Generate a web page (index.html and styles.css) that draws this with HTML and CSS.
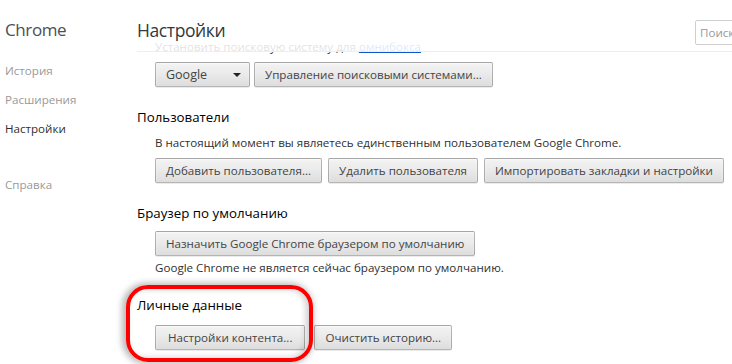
FILE: index.html
```html
<!DOCTYPE html>
<html lang="ru">
<head>
    <meta charset="utf-8">
    <title>Настройки</title>
    <link rel="stylesheet" href="styles.css">
</head>
<body>
    <div class="page">
        <nav class="sidebar">
            <div class="brand">Chrome</div>
            <ul class="nav">
                <li>История</li>
                <li>Расширения</li>
                <li class="active">Настройки</li>
                <li class="help">Справка</li>
            </ul>
        </nav>

        <main class="content">
            <div class="scroll">
                <div class="section-body">
                    <p class="line">Установить поисковую систему для <a href="#">омнибокса</a></p>
                    <div class="row">
                        <div class="select">Google <span class="arrow"></span></div>
                        <button>Управление поисковыми системами...</button>
                    </div>
                </div>

                <section class="section">
                    <h3>Пользователи</h3>
                    <div class="section-body">
                        <p class="line">В настоящий момент вы являетесь единственным пользователем Google Chrome.</p>
                        <div class="row">
                            <button>Добавить пользователя...</button>
                            <button>Удалить пользователя</button>
                            <button>Импортировать закладки и настройки</button>
                        </div>
                    </div>
                </section>

                <section class="section">
                    <h3>Браузер по умолчанию</h3>
                    <div class="section-body">
                        <div class="row">
                            <button>Назначить Google Chrome браузером по умолчанию</button>
                        </div>
                        <p class="line after">Google Chrome не является сейчас браузером по умолчанию.</p>
                    </div>
                </section>

                <section class="section last">
                    <h3>Личные данные</h3>
                    <div class="section-body">
                        <div class="row wide">
                            <button class="content-btn">Настройки контента...</button>
                            <button>Очистить историю...</button>
                        </div>
                    </div>
                </section>
            </div>

            <header class="top">
                <h1>Настройки</h1>
                <input class="search" type="text" placeholder="Поиск">
            </header>
        </main>
    </div>

    <div class="mark"></div>
</body>
</html>
```

FILE: styles.css
```css
html,
body {
    margin: 0;
    padding: 0;
    width: 100%;
    height: 100%;
    overflow: hidden;
}

body {
    font-family: "Open Sans", "DejaVu Sans", sans-serif;
    font-size: 11.6px;
    color: #303030;
    background: #fff;
}

.page {
    display: flex;
    height: 100%;
}

.sidebar {
    width: 132px;
    padding-left: 5px;
    flex: none;
}

.brand {
    margin-top: 17px;
    font-size: 17px;
    letter-spacing: -0.4px;
    line-height: 26px;
    color: #4a4f55;
}

.nav {
    list-style: none;
    margin: 13px 0 0 0;
    padding: 0;
}

.nav li {
    line-height: 29px;
    color: #999;
}

.nav li.active {
    color: #303030;
}

.nav li.help {
    margin-top: 27px;
}

.content {
    flex: 1;
    position: relative;
    min-width: 0;
}

.top {
    position: absolute;
    top: 0;
    left: 0;
    right: 0;
    height: 51px;
    display: flex;
    justify-content: space-between;
    background-color: rgba(255, 255, 255, 0.86);
    border-bottom: 1px solid #eee;
}

.top h1 {
    margin: 0;
    padding-top: 17px;
    font-size: 17.5px;
    letter-spacing: -0.4px;
    line-height: 26px;
    font-weight: normal;
    color: #303942;
}

.search {
    box-sizing: border-box;
    margin: 20px -30px 0 0;
    width: 67px;
    height: 25px;
    padding: 0 4px;
    border: 1px solid #cfcfcf;
    border-radius: 2px;
    font-family: inherit;
    font-size: 11.6px;
    color: #999;
}

.search::placeholder {
    color: #999;
}

.scroll {
    padding-top: 39px;
}

.section-body {
    padding-left: 18px;
}

.line {
    margin: 0;
    line-height: 16px;
    white-space: nowrap;
}

.line a {
    color: #15c;
}

.row {
    display: flex;
    gap: 6px;
    margin-top: 7px;
}

.row.wide {
    gap: 9px;
}

.line.after {
    margin-top: 4px;
}

.section {
    margin-top: 20px;
}

.section h3 {
    margin: 0 0 8px 0;
    font-size: 13.3px;
    line-height: 20px;
    font-weight: normal;
    color: #000;
}

.section:nth-of-type(3) h3,
.section.last h3 {
    margin-bottom: 10px;
}

.section.last {
    margin-top: 19px;
}

.section h3 + .section-body > .row:first-child {
    margin-top: 0;
}

button,
.select {
    box-sizing: border-box;
    height: 25px;
    padding: 0 10px;
    font-family: inherit;
    font-size: 11.6px;
    color: #444;
    white-space: nowrap;
    background: linear-gradient(#f2f2f2, #ececec 40%, #dddddd);
    border: 1px solid rgba(0, 0, 0, 0.25);
    border-radius: 2px;
    box-shadow: 0 1px 0 rgba(0, 0, 0, 0.08), inset 0 1px 2px rgba(255, 255, 255, 0.75);
}

.content-btn {
    padding: 0 12px;
}

.select {
    display: flex;
    align-items: center;
    justify-content: space-between;
    width: 95px;
    margin-right: -2px;
    padding: 0 8px 0 10px;
    font-size: 12.5px;
}

.arrow {
    width: 0;
    height: 0;
    border-left: 4px solid transparent;
    border-right: 4px solid transparent;
    border-top: 4px solid #222;
}

.mark {
    position: absolute;
    left: 126px;
    top: 285px;
    width: 179px;
    height: 69px;
    border: 4px solid #f00;
    border-radius: 22px;
    box-shadow: -2px 0 6px 2px rgba(0, 0, 0, 0.28), inset -3px 0 6px rgba(0, 0, 0, 0.2);
}
```
